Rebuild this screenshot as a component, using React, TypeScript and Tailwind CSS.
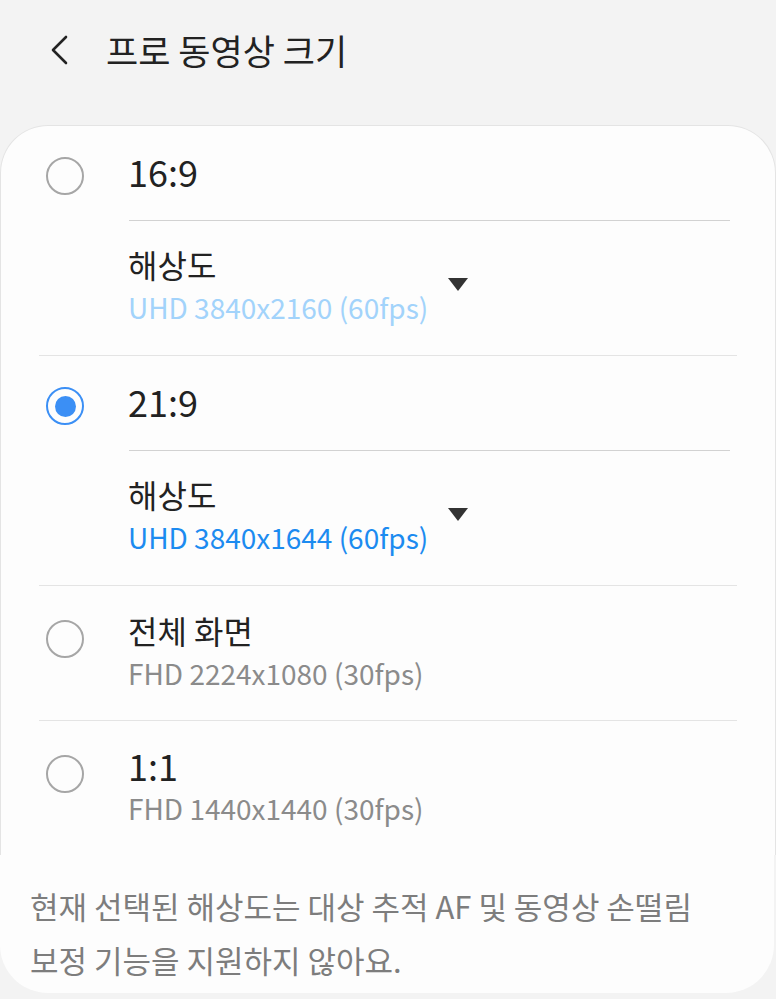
const font = { fontFamily: '"Noto Sans CJK KR", "Noto Sans", sans-serif' };

type Option = {
  label: string;
  numeric: boolean;
  selected: boolean;
  detail: string;
  dropdown: boolean;
};

const options: Option[] = [
  { label: "16:9", numeric: true, selected: false, detail: "UHD 3840x2160 (60fps)", dropdown: true },
  { label: "21:9", numeric: true, selected: true, detail: "UHD 3840x1644 (60fps)", dropdown: true },
  { label: "전체 화면", numeric: false, selected: false, detail: "FHD 2224x1080 (30fps)", dropdown: false },
  { label: "1:1", numeric: true, selected: false, detail: "FHD 1440x1440 (30fps)", dropdown: false },
];

function Radio({ selected }: { selected: boolean }) {
  return selected ? (
    <span className="flex h-[38px] w-[38px] items-center justify-center rounded-full border-[2px] border-[#3b8ff5]">
      <span className="h-[21px] w-[21px] rounded-full bg-[#3b8ff5]" />
    </span>
  ) : (
    <span className="block h-[38px] w-[38px] rounded-full border-[2px] border-[#a6a6a6]" />
  );
}

function Caret() {
  return (
    <svg width="20" height="13" viewBox="0 0 20 13" className="shrink-0">
      <path d="M0 0 H20 L10 13 Z" fill="#333" />
    </svg>
  );
}

function Section({ option, last }: { option: Option; last: boolean }) {
  const labelCls = option.numeric ? "text-[36px]" : "text-[32px]";
  if (option.dropdown) {
    return (
      <div className={last ? "" : "mx-[38px] border-b border-[#e4e4e4]"}>
        <div className="flex h-[94px] items-center pt-[6px]">
          <span className="flex w-[52px] justify-center">
            <Radio selected={option.selected} />
          </span>
          <span className={`ml-[37px] mb-[10px] ${labelCls} leading-[46px] text-[#222]`}>{option.label}</span>
        </div>
        <div className="ml-[90px] mr-[7px] border-t border-[#d2d2d2]" />
        <div className="flex h-[134px] items-center gap-[20px] pl-[89px] pb-[8px]">
          <div className="flex flex-col">
            <span className="text-[32px] leading-[46px] text-[#222]">해상도</span>
            <span
              className={`text-[28px] leading-[40px] ${
                option.selected ? "text-[#1c8bf0]" : "text-[#a2d3fb]"
              }`}
            >
              {option.detail}
            </span>
          </div>
          <Caret />
        </div>
      </div>
    );
  }
  return (
    <div className={last ? "mx-[38px]" : "mx-[38px] border-b border-[#e4e4e4]"}>
      <div className="flex h-[134px] items-start">
        <span className="mt-[34px] flex w-[52px] justify-center">
          <Radio selected={option.selected} />
        </span>
        <div className="ml-[37px] flex flex-col pt-[21px]">
          <span className={`${labelCls} leading-[46px] text-[#222]`}>{option.label}</span>
          <span className="text-[28px] leading-[40px] text-[#8b8b8b]">{option.detail}</span>
        </div>
      </div>
    </div>
  );
}

export default function App() {
  return (
    <div className="min-h-[999px] w-[776px] bg-[#f3f3f3]" style={font}>
      <header className="flex h-[125px] items-start pt-[22px]">
        <svg width="24" height="32" viewBox="0 0 24 32" className="ml-[47px] mt-[12px]">
          <path d="M19 3 L6 16 L19 29" fill="none" stroke="#222" strokeWidth="2.6" strokeLinecap="round" strokeLinejoin="round" />
        </svg>
        <h1 className="ml-[35px] text-[35px] leading-[56px] text-[#222]">프로 동영상 크기</h1>
      </header>

      <div className="rounded-t-[48px] border border-b-0 border-[#e4e4e4] bg-[#fdfdfd]">
        {options.map((o, i) => (
          <Section key={o.label} option={o} last={i === options.length - 1} />
        ))}
      </div>
      <div className="mr-[2px] h-[138px] rounded-b-[48px] bg-[#fdfdfd] px-[30px] pt-[24px]">
        <p className="text-[31px] leading-[54px] text-[#7d7d7d]">
          현재 선택된 해상도는 대상 추적 AF 및 동영상 손떨림
          <br />
          보정 기능을 지원하지 않아요.
        </p>
      </div>
    </div>
  );
}
